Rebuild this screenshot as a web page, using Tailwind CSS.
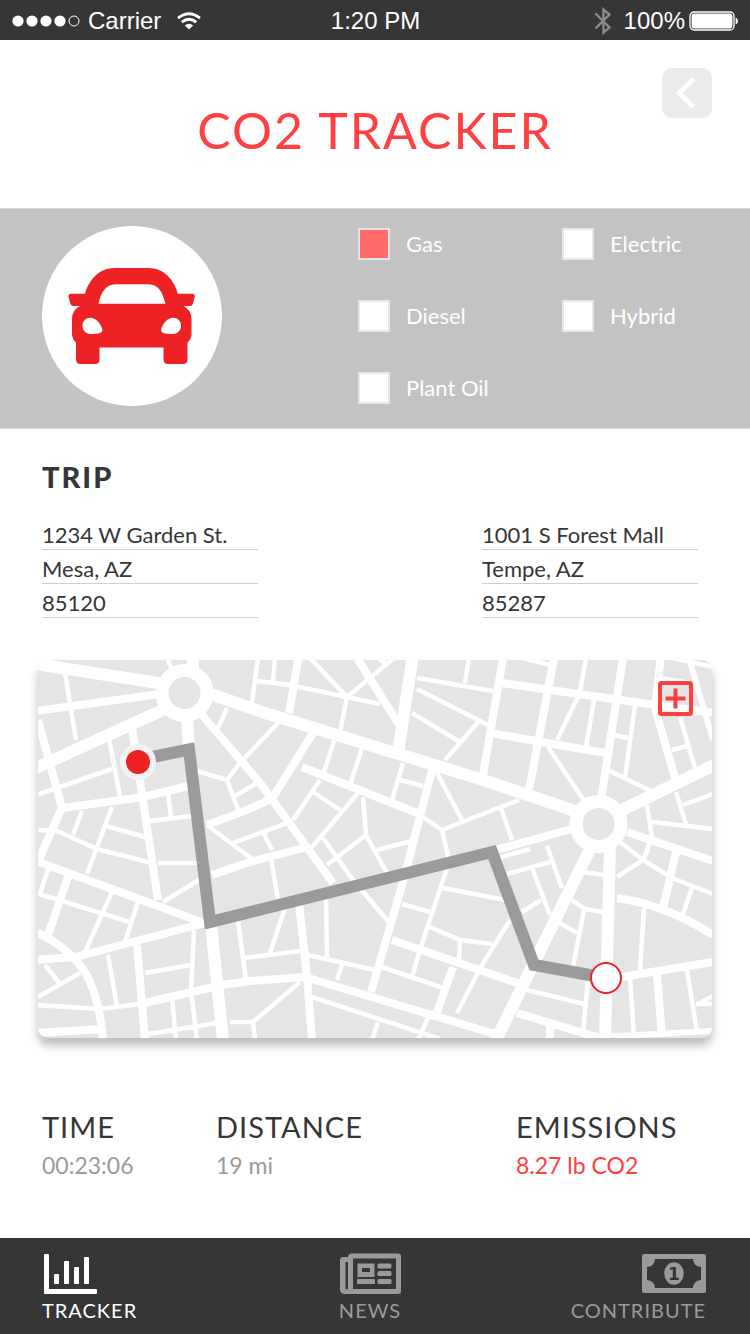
<!DOCTYPE html>
<html lang="en">
<head>
    <meta charset="UTF-8">
    <meta name="viewport" content="width=device-width, initial-scale=1.0">
    <title>CO2 Tracker</title>
    <script src="https://cdn.jsdelivr.net/npm/@tailwindcss/browser@4"></script>
</head>
<body class="min-h-screen flex flex-col bg-white text-[#363636] font-['Lato',sans-serif]">

    <!-- Status bar -->
    <div class="h-10 shrink-0 grid grid-cols-[1fr_auto_1fr] items-center pl-3 pr-[11px] pt-px bg-[#363636] text-white text-2xl leading-9 font-['Liberation_Sans',sans-serif]">
        <div class="flex items-center">
            <svg class="w-[68px] h-3 mr-2" viewBox="0 0 68 12" fill="#fff" aria-hidden="true">
                <circle cx="6" cy="6" r="5.6"/>
                <circle cx="20" cy="6" r="5.6"/>
                <circle cx="34" cy="6" r="5.6"/>
                <circle cx="48" cy="6" r="5.6"/>
                <circle cx="62" cy="6" r="5" fill="none" stroke="#fff"/>
            </svg>
            <span>Carrier</span>
            <svg class="w-6 h-[18px] ml-4" viewBox="0 0 24 18" fill="none" stroke="#fff" stroke-width="2.8" aria-hidden="true">
                <path d="M1 6.2Q12 -2.6 23 6.2"/>
                <path d="M4.8 10.2Q12 4.4 19.2 10.2"/>
                <path d="M12 17.6L7.8 13.4Q12 10.2 16.2 13.4Z" fill="#fff" stroke="none"/>
            </svg>
        </div>
        <span>1:20 PM</span>
        <div class="flex items-center justify-end">
            <svg class="w-[18px] h-7 mr-3" viewBox="0 0 18 28" fill="none" stroke="#8a8a8a" stroke-width="2.4" aria-hidden="true">
                <path d="M1.5 6.5L15.5 20.5L9.500 25.500V2.500L15.5 7.500L1.5 21.5"/>
            </svg>
            <span>100%</span>
            <svg class="w-[50px] h-5 ml-1" viewBox="0 0 50 20" aria-hidden="true">
                <rect x="1" y="1" width="44" height="18" rx="4" fill="none" stroke="#fff" stroke-width="1.3"/>
                <rect x="2.6" y="2.6" width="40.8" height="14.8" rx="2.6" fill="#fff"/>
                <path d="M46.6 6.5Q49 7 49 10T46.6 13.5Z" fill="#fff"/>
            </svg>
        </div>
    </div>

    <!-- Header -->
    <header class="h-[168px] shrink-0 grid grid-cols-[1fr_auto_1fr] pt-7 px-[38px]">
        <h1 class="col-start-2 pt-8 text-[50px] leading-[60px] tracking-[2px] text-[#ff4040]">CO2 TRACKER</h1>
        <button type="button" aria-label="Back" class="justify-self-end size-[50px] rounded-[10px] bg-[#ebebeb]">
            <svg viewBox="0 0 50 50" fill="none" stroke="#fff" stroke-width="5" aria-hidden="true">
                <path d="M31.5 11L17 25L31.5 39"/>
            </svg>
        </button>
    </header>

    <!-- Vehicle and fuel -->
    <section class="h-[221px] shrink-0 flex items-start justify-between pt-[17px] px-[42px] bg-[#c3c3c3] border-y border-[#dadada]">
        <div class="size-[180px] pr-[2px] rounded-full bg-white flex items-center justify-center">
            <svg class="w-[127px] h-24" viewBox="0 0 126 96" fill="#ee2225" fill-rule="evenodd" aria-hidden="true">
                <path d="M16.5 25.7C21 11 31 0 46 0H80C95 0 105 11 109.500 25.700H124Q126.500 25.700 126.300 28.800L124.500 35.500Q124 38 121.500 38H115Q123 42 123 51V66Q123 71 119 74.500V91.500Q119 96 114.500 96H99.500Q95 96 95 91.500V79.500H31V91.500Q31 96 26.500 96H12Q7.500 96 7.500 91.500V74.500Q3.500 71 3.500 66V51Q3.500 42 11.500 38H5Q2.500 38 1.800 35.500L0 28.800Q-.2 25.700 2.500 25.700Z
                         M30 35.700H97Q94 25 91 21.500Q87 16.300 79 16.300H48Q40 16.300 36 21.500Q32.500 25 30 35.700Z
                         M14 57.500C14 53 17.500 49.700 21.700 49.700C27.500 49.700 32 55.500 33.600 60.500C35 65 30.500 66 22 66C17 66 14 62 14 57.500Z
                         M112.500 57.500C112.500 53 109 49.700 104.800 49.700C99 49.700 94.500 55.500 92.900 60.500C91.500 65 96 66 104.500 66C109.500 66 112.500 62 112.500 57.500Z"/>
            </svg>
        </div>
        <div class="grid grid-cols-[204px_146px] gap-y-10 mt-[2px] text-[22px] leading-8 text-white">
            <label class="flex items-center gap-4"><input type="checkbox" checked class="appearance-none size-8 border-2 border-[#e6e6e6] bg-white checked:bg-[#ff6b6b]">Gas</label>
            <label class="flex items-center gap-4"><input type="checkbox" class="appearance-none size-8 border-2 border-[#e6e6e6] bg-white checked:bg-[#ff6b6b]">Electric</label>
            <label class="flex items-center gap-4"><input type="checkbox" class="appearance-none size-8 border-2 border-[#e6e6e6] bg-white checked:bg-[#ff6b6b]">Diesel</label>
            <label class="flex items-center gap-4"><input type="checkbox" class="appearance-none size-8 border-2 border-[#e6e6e6] bg-white checked:bg-[#ff6b6b]">Hybrid</label>
            <label class="flex items-center gap-4"><input type="checkbox" class="appearance-none size-8 border-2 border-[#e6e6e6] bg-white checked:bg-[#ff6b6b]">Plant Oil</label>
        </div>
    </section>

    <!-- Trip -->
    <section class="pt-8 pl-[42px] pr-[52px]">
        <h2 class="text-[29px] leading-8 font-black tracking-[2px]">TRIP</h2>
        <div class="flex justify-between pt-[23px] text-[22px]">
            <div class="w-[216px]">
                <input type="text" aria-label="Start street" value="1234 W Garden St." class="block w-full h-[34px] pt-[3px] border-b border-[#cfcfcf]">
                <input type="text" aria-label="Start city" value="Mesa, AZ" class="block w-full h-[34px] pt-[3px] border-b border-[#cfcfcf]">
                <input type="text" aria-label="Start zip" value="85120" class="block w-full h-[34px] pt-[3px] border-b border-[#cfcfcf]">
            </div>
            <div class="w-[216px]">
                <input type="text" aria-label="End street" value="1001 S Forest Mall" class="block w-full h-[34px] pt-[3px] border-b border-[#cfcfcf]">
                <input type="text" aria-label="End city" value="Tempe, AZ" class="block w-full h-[34px] pt-[3px] border-b border-[#cfcfcf]">
                <input type="text" aria-label="End zip" value="85287" class="block w-full h-[34px] pt-[3px] border-b border-[#cfcfcf]">
            </div>
        </div>
    </section>

    <!-- Map -->
    <section class="relative mt-[42px] mx-[38px]">
        <svg class="block w-full rounded-[10px] bg-[#e5e5e5] shadow-[0_8px_10px_rgba(0,0,0,0.25)]" viewBox="38 660 674 378" role="img" aria-label="Trip route map">
            <g fill="none" stroke="#fff">
                <!-- avenues -->
                <g stroke-width="12">
                    <path d="M36 664L165 684M36 768L165 709M187 715L189 750M193 655V670M208 693L262 712L480 779L575 811M413 655L398 752M716 764L620 811M610 845L605 1040M592 845L496 1040M211 925L223 1040"/>
                </g>
                <!-- streets -->
                <g stroke-width="8">
                    <path d="M36 711L160 694M38 720L62 808L43 850L38 864M132 728L158 900M62 808L143 797L188 786M202 715L260 783L333 883M313 733L273 797Q267 803 207 825M212 875L250 862L307 847"/>
                    <path d="M299 655L289 713M357 658L400 726M302 767L417 813M432 770L403 882L371 992M503 658L483 775M554 658L529 790M623 658L601 800M661 655L655 708L677 785M502 683L655 705L715 713M490 733L605 753"/>
                    <path d="M492 851L575 828M627 832L716 862M677 848L663 908M617 898Q667 905 713 935M622 977L713 962M657 975L662 1036"/>
                    <path d="M36 861L204 923M68 877L47 938M36 960L75 957L209 922M36 932C85 955 98 985 103 1040M137 945L145 1040M140 1004L222 985L250 981L305 977L495 1034M299 903L307 977L312 1040M392 940L520 984M453 967L437 1012M517 1013L600 1038M550 1026V1040M36 1033L102 1029"/>
                </g>
                <!-- lanes, west -->
                <g stroke-width="4.5">
                    <path d="M65 673L76 740M36 795L112 769M109 738L120 797M168 793L171 817M150 821L192 816M36 830L57 831L97 849L152 863M82 811L73 835M112 807L87 874M106 826L145 837M167 658L172 670M227 708L218 728"/>
                    <path d="M278 723L240 763L227 780L197 771M227 780L239 812M235 796L257 783M207 825L252 859M233 843L290 822M263 832L272 850M258 658L252 702"/>
                    <path d="M158 863H197M163 902L199 880M49 866L40 894M36 893L130 922M112 892L85 952M138 902L125 942M45 965L60 984M36 998L80 973M108 955L117 1006M36 1005L100 1009L140 1004M145 973L191 965M194 930L191 990L197 1040M172 998L176 1040M148 1034L217 1023M238 921L246 980M245 958L300 951M285 908L270 953M271 858L278 900M230 1022H253L300 982M253 1022L255 1040"/>
                </g>
                <!-- lanes, centre -->
                <g stroke-width="4.5">
                    <path d="M257 681L290 685L347 697L380 704M275 658L273 681M310 658L347 697L394 658M378 658L388 665M347 697L340 732M417 678L493 691M469 658L465 683M417 689L490 726M412 713L460 742M480 720L445 760M335 738L324 772M362 748L350 785M403 763L392 800M400 780L423 786"/>
                    <path d="M437 773L462 820M423 817L442 830L480 815L519 800M442 830L449 860M320 780L293 820M313 792L340 810M358 793L312 847M363 797L366 835L327 865M366 835L388 875M377 850L412 841M323 838L353 880L388 921"/>
                    <path d="M326 898L327 957M308 955L375 970M342 965L337 980M312 997L440 1039M378 1022L372 1040M402 904L430 912M382 967L443 988M430 927L460 940L492 944M460 940L459 962M447 868L420 950L412 977M443 888L505 900M430 1013L418 1040M510 920L482 965L457 1013"/>
                </g>
                <!-- lanes, east -->
                <g stroke-width="4.5">
                    <path d="M523 658L550 665M586 658L580 692M578 697L557 740M594 700L586 747M635 705L625 778M615 735L628 738M608 770L655 793M548 747L585 802M672 658L713 667M660 678L690 683M680 717L695 768M672 750L687 746M713 794L683 805M676 792L686 824M652 822L713 829M647 805L652 837L645 855M501 808L512 840"/>
                    <path stroke-width="6" d="M688 655L713 740M600 1037L713 1031"/>
                    <path d="M620 842L643 860L672 878L713 894M648 850L643 860L617 877M692 888L682 917M644 908L640 970M630 978L634 1037M687 970L697 1032M696 1004H713L698 1004L713 996M583 872L604 875M572 900L585 909L604 912M584 910L573 967M560 923L577 933M547 846L562 888M507 874L550 862M532 868L550 915M498 858L530 849M522 912L541 900M527 990L584 1004M588 980L583 1032"/>
                </g>
            </g>

            <!-- roundabouts -->
            <g fill="#e5e5e5" stroke="#fff" stroke-width="13">
                <circle cx="184.500" cy="693" r="22.500"/>
                <circle cx="598.500" cy="824" r="22.500"/>
            </g>

            <!-- route -->
            <path d="M138 760L189 749.500L210 922L492 852L534 965L606 978" fill="none" stroke="#9a9a9a" stroke-width="12"/>
            <circle cx="138" cy="762" r="18" fill="#f3f3f3"/>
            <circle cx="138" cy="762" r="12" fill="#ee2225"/>
            <circle cx="606" cy="978" r="15" fill="#fff" stroke="#ee2225" stroke-width="2"/>
        </svg>
        <button type="button" aria-label="Enlarge map" class="absolute top-[21px] right-[19px] size-[35px]">
            <svg viewBox="0 0 35 35" fill="none" stroke="#ff4040" aria-hidden="true">
                <rect x="2" y="2" width="31" height="31" rx="1.500" stroke-width="4"/>
                <path d="M7.500 17.500H27.500M17.500 7.500V27.500" stroke-width="4"/>
            </svg>
        </button>
    </section>

    <!-- Trip totals -->
    <dl class="grid grid-cols-[174px_300px_1fr] pt-[71px] pb-12 px-[42px] text-[#9a9a9a]">
        <div>
            <dt class="text-[29px] leading-9 tracking-[1px] text-[#363636]">TIME</dt>
            <dd class="text-[23px] leading-10">00:23:06</dd>
        </div>
        <div>
            <dt class="text-[29px] leading-9 tracking-[1px] text-[#363636]">DISTANCE</dt>
            <dd class="text-[23px] leading-10">19 mi</dd>
        </div>
        <div>
            <dt class="text-[29px] leading-9 tracking-[1px] text-[#363636]">EMISSIONS</dt>
            <dd class="text-[23px] leading-10 text-[#ff4040]">8.27 lb CO2</dd>
        </div>
    </dl>

    <!-- Tab bar -->
    <nav class="h-24 shrink-0 mt-auto grid grid-cols-[1fr_auto_1fr] pt-[15px] pl-[42px] pr-11 bg-[#363636] text-xl leading-[30px] tracking-[1px] text-[#9a9a9a]">
        <a href="#tracker" class="flex flex-col items-start text-white">
            <svg class="w-[53px] h-[42px] ml-[2px]" viewBox="0 0 53 42" fill="#fff" aria-hidden="true">
                <path d="M1 1H4Q5 1 5 2V36H52Q53 36 53 37V40Q53 41 52 41H1Q0 41 0 40V2Q0 1 1 1Z"/>
                <rect x="10" y="21" width="5" height="10" rx=".8"/>
                <rect x="20" y="8" width="5" height="23" rx=".8"/>
                <rect x="30" y="14" width="5" height="17" rx=".8"/>
                <rect x="40" y="4" width="5" height="27" rx=".8"/>
            </svg>
            TRACKER
        </a>
        <a href="#news" class="flex flex-col items-center pr-2">
            <svg class="w-[61px] h-[42px]" viewBox="0 0 61 42" fill="#9a9a9a" fill-rule="evenodd" aria-hidden="true">
                <path d="M3 4H8Q8.500 .5 11.500 .5H58Q61 .5 61 3.500V38Q61 41 58 41H5Q0 41 0 36V7Q0 4 3 4ZM5.500 9V35.500Q5.500 36.500 6.700 36.500T8 35.500V9ZM13 5.500V36H56V5.500Z"/>
                <path d="M17.500 10.500H34.500V24H17.500ZM22 15V19H30V15Z"/>
                <rect x="17" y="26" width="18" height="5" rx="1"/>
                <rect x="37.500" y="10.500" width="14" height="5" rx="1.500"/>
                <rect x="37.500" y="18" width="14" height="5" rx="1.500"/>
                <rect x="37.500" y="26" width="14" height="5" rx="1.500"/>
            </svg>
            NEWS
        </a>
        <a href="#contribute" class="flex flex-col items-end">
            <svg class="w-16 h-[42px]" viewBox="0 0 64 42" fill="#9a9a9a" aria-hidden="true">
                <path fill-rule="evenodd" d="M2 1H62Q64 1 64 3V38Q64 40 62 40H2Q0 40 0 38V3Q0 1 2 1ZM13 6Q12.500 13.500 5 14V27Q12.500 27.500 13 35H51Q51.500 27.500 59 27V14Q51.500 13.500 51 6Z"/>
                <ellipse cx="32" cy="20.500" rx="9.700" ry="11.300"/>
                <text x="32" y="26.500" text-anchor="middle" class="text-[17px] font-bold tracking-normal font-['DejaVu_Sans',sans-serif]" fill="#363636">1</text>
            </svg>
            CONTRIBUTE
        </a>
    </nav>
</body>
</html>
